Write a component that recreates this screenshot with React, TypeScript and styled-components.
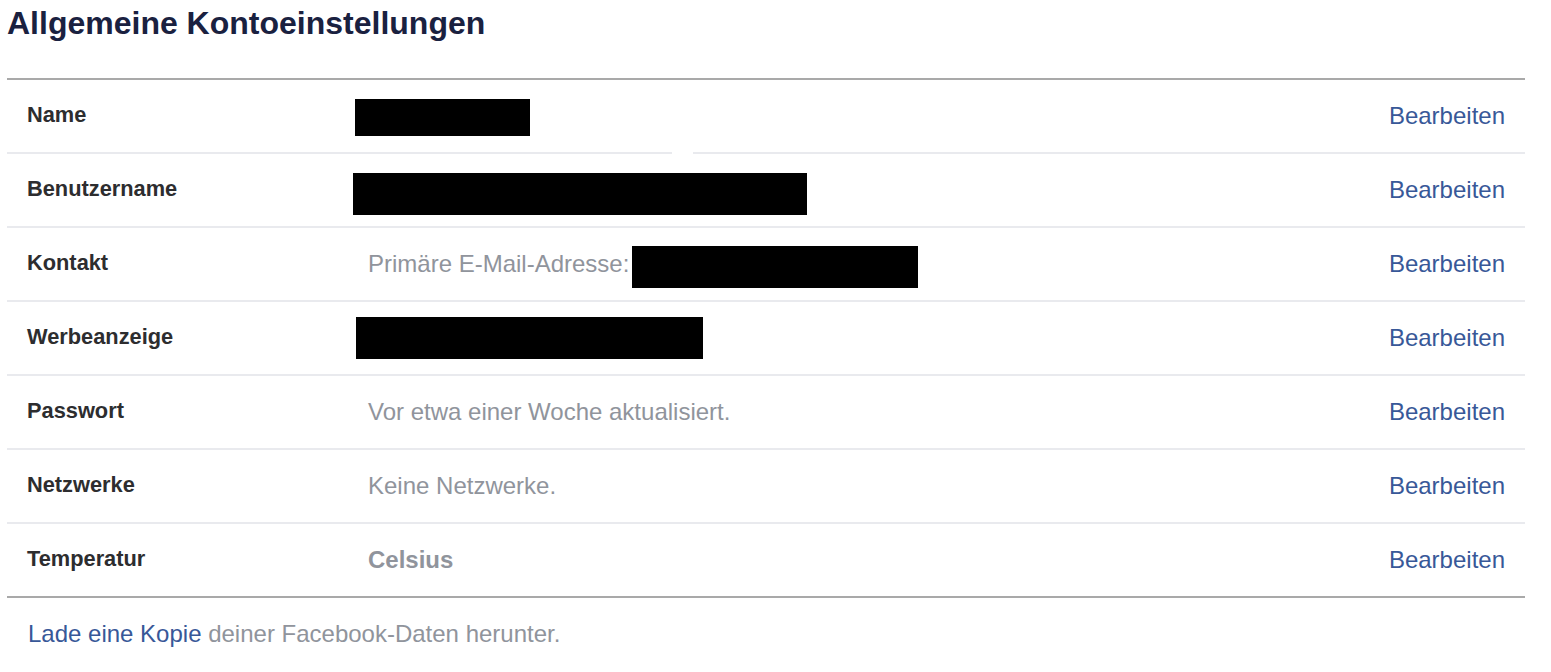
import React from "react";
import styled, { createGlobalStyle } from "styled-components";

const Global = createGlobalStyle`
  html, body { margin: 0; padding: 0; background: #fff; }
  body { font-family: "Liberation Sans", Arial, sans-serif; }
`;

const Page = styled.div`
  padding: 0 27px 0 7px;
  width: 1518px;
`;

const Title = styled.h1`
  margin: 0;
  padding: 4px 0 0 0;
  height: 78px;
  box-sizing: border-box;
  font-size: 32px;
  line-height: 38px;
  font-weight: bold;
  color: #1a2140;
`;

const List = styled.div`
  border-top: 2px solid #a9a9a9;
  border-bottom: 2px solid #a9a9a9;
`;

const Row = styled.div<{ $last?: boolean }>`
  display: grid;
  grid-template-columns: 341px 1fr auto;
  align-items: center;
  height: ${(p) => (p.$last ? 72 : 74)}px;
  box-sizing: border-box;
  padding: 0 20px 0 20px;
  border-bottom: ${(p) => (p.$last ? "none" : "2px solid #e9eaee")};
  position: relative;
`;

const Label = styled.div`
  font-size: 21.8px;
  font-weight: bold;
  color: #2d2d2f;
  margin-top: -3px;
`;

const Value = styled.div<{ $bold?: boolean }>`
  display: flex;
  align-items: center;
  font-size: 24px;
  color: #90949c;
  font-weight: ${(p) => (p.$bold ? "bold" : "normal")};
`;

const Redact = styled.span<{ $w: number; $h: number; $dx?: number; $dy?: number }>`
  display: inline-block;
  width: ${(p) => p.$w}px;
  height: ${(p) => p.$h}px;
  background: #000;
  margin-left: ${(p) => p.$dx ?? 0}px;
  margin-top: ${(p) => (p.$dy ?? 0) * 2}px;
`;

const Edit = styled.a`
  font-size: 24px;
  color: #385898;
  text-decoration: none;
  cursor: pointer;
`;

const Notch = styled.span`
  position: absolute;
  left: 665px;
  bottom: -2px;
  width: 21px;
  height: 3px;
  background: #fff;
`;

const Footer = styled.div`
  padding: 22px 0 0 21px;
  font-size: 24px;
  color: #90949c;
`;

const Link = styled.a`
  color: #385898;
  text-decoration: none;
`;

type RowData = { label: string; value: React.ReactNode; bold?: boolean; notch?: boolean };

const rows: RowData[] = [
  { label: "Name", value: <Redact $w={175} $h={37} $dx={-13} $dy={1} />, notch: true },
  { label: "Benutzername", value: <Redact $w={454} $h={42} $dx={-15} $dy={4} /> },
  {
    label: "Kontakt",
    value: (
      <>
        Primäre E-Mail-Adresse:&nbsp;
        <Redact $w={286} $h={42} $dx={-4} $dy={3} />
      </>
    ),
  },
  { label: "Werbeanzeige", value: <Redact $w={347} $h={42} $dx={-12} $dy={0} /> },
  { label: "Passwort", value: "Vor etwa einer Woche aktualisiert." },
  { label: "Netzwerke", value: "Keine Netzwerke." },
  { label: "Temperatur", value: "Celsius", bold: true },
];

export default function App() {
  return (
    <>
      <Global />
      <Page>
        <Title>Allgemeine Kontoeinstellungen</Title>
        <List>
          {rows.map((r, i) => (
            <Row key={r.label} $last={i === rows.length - 1}>
              <Label>{r.label}</Label>
              <Value $bold={r.bold}>{r.value}</Value>
              <Edit>Bearbeiten</Edit>
              {r.notch && <Notch />}
            </Row>
          ))}
        </List>
        <Footer>
          <Link>Lade eine Kopie</Link> deiner Facebook-Daten herunter.
        </Footer>
      </Page>
    </>
  );
}
